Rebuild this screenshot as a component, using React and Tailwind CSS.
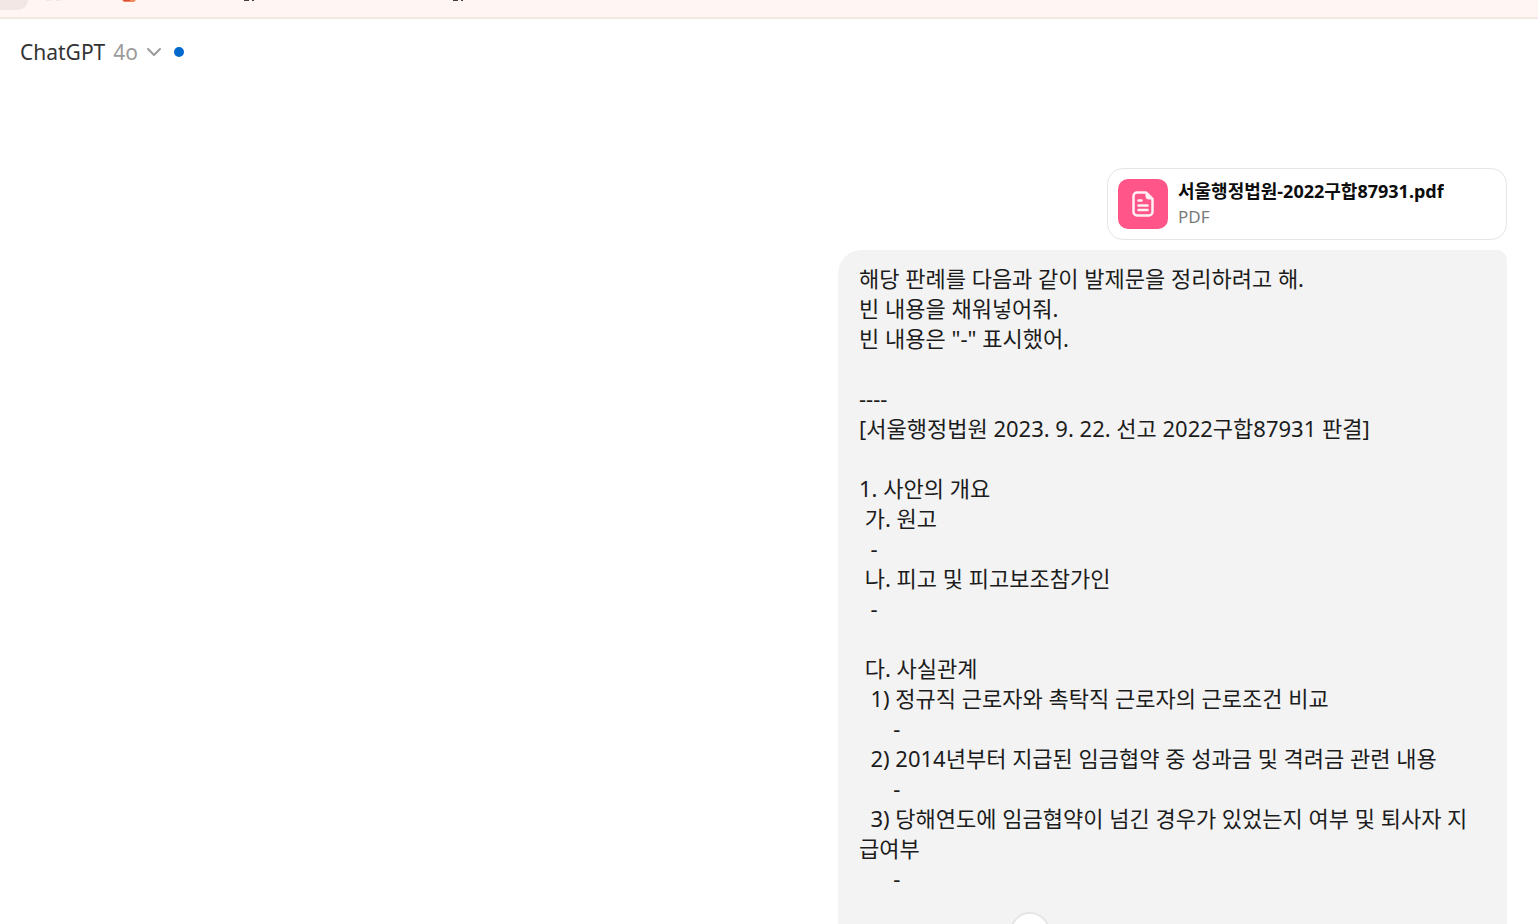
import React from 'react';
import { ArrowDown, ChevronDown } from 'lucide-react';

const message = `해당 판례를 다음과 같이 발제문을 정리하려고 해.
빈 내용을 채워넣어줘.
빈 내용은 "-" 표시했어.

----
[서울행정법원 2023. 9. 22. 선고 2022구합87931 판결]

1. 사안의 개요
 가. 원고
  -
 나. 피고 및 피고보조참가인
  -

 다. 사실관계
  1) 정규직 근로자와 촉탁직 근로자의 근로조건 비교
      -
  2) 2014년부터 지급된 임금협약 중 성과금 및 격려금 관련 내용
      -
  3) 당해연도에 임금협약이 넘긴 경우가 있었는지 여부 및 퇴사자 지급여부
      -


`;

const FileIcon = () => (
    <svg viewBox="0 0 24 28" className="h-7 w-6" fill="none" stroke="#fff0f5" strokeWidth="2.5" strokeLinecap="round" strokeLinejoin="round" aria-hidden="true">
        <path d="M15 2.500H6A3.500 3.500 0 0 0 2.500 6v16A3.500 3.500 0 0 0 6 25.500h12a3.500 3.500 0 0 0 3.500-3.500V9Z" />
        <path d="M15 3v3.500A2.500 2.500 0 0 0 17.500 9H21L15 3Z" fill="#fff0f5" strokeWidth="1" />
        <path d="M7.500 10.500h3M7.500 15.500h9M7.500 20h9" />
    </svg>
);

// 브라우저 북마크바 하단
const BookmarkBar = () => (
    <div className="h-[19px] shrink-0 overflow-hidden border-b-2 border-[#f5e7e2] bg-[#fff6f3]">
        <svg width="500" height="16" aria-hidden="true">
            <rect x="-20" y="-20" width="48" height="30" rx="10" fill="#f3e7e5" />
            <path d="M46 0h5M56 0h5" stroke="#f3e7e5" strokeWidth="2" />
            <path d="M122 0h14l-2 2h-10z" fill="#f08a5a" />
            <path d="M123 0h7v1h-6z" fill="#dc4a3c" />
            <path d="M244 0h5v1h-5zM252 0h2v1h-2zM453 0h5v1h-5zM461 0h2v1h-2z" fill="#4a3c3a" />
        </svg>
    </div>
);

const Header = () => (
    <header className="flex shrink-0 items-center px-5 pt-[15px]">
        <button type="button" className="flex items-center text-[21px] leading-9 text-[#333333]">
            <span>ChatGPT</span>
            <span className="ml-2 text-[#9b9b9b]">4o</span>
            <ChevronDown size={24} strokeWidth={2} className="ml-1 text-[#9b9b9b]" />
        </button>
        <span className="ml-2 size-[10px] rounded-full bg-[#0169cc]" />
    </header>
);

const Attachment = () => (
    <div className="flex w-[400px] max-w-full items-center gap-[10px] rounded-2xl border border-[#e5e5e5] bg-white p-[10px]">
        <div className="flex size-[50px] shrink-0 items-center justify-center rounded-[10px] bg-[#ff5588]">
            <FileIcon />
        </div>
        <div className="min-w-0">
            <div className="truncate text-[18px] leading-[25px] font-bold text-[#0d0d0d]">서울행정법원-2022구합87931.pdf</div>
            <div className="text-[17px] leading-[25px] text-[#7a7a7a]">PDF</div>
        </div>
    </div>
);

const App = () => {
    return (
        <div className="flex h-screen flex-col overflow-hidden bg-white font-['Noto_Sans','Noto_Sans_CJK_KR',sans-serif]">
            <BookmarkBar />
            <Header />
            <main className="min-h-0 flex-1 overflow-hidden pr-[31px]">
                <div className="relative ml-auto flex h-full w-full max-w-[954px] flex-col items-end gap-[10px] pt-[98px]">
                    <Attachment />
                    <div className="w-full max-w-[669px] shrink-0 rounded-3xl rounded-tr-[10px] bg-[#f3f3f3] px-[21px] py-[13px]">
                        <p className="text-[22px] leading-[30px] break-words whitespace-pre-wrap text-[#1c1c1c]">{message}</p>
                    </div>
                    <button
                        type="button"
                        aria-label="맨 아래로 스크롤"
                        className="absolute -bottom-7 left-1/2 flex size-10 -translate-x-1/2 items-center justify-center rounded-full border-2 border-[#e6e6e6] bg-white text-[#333333]"
                    >
                        <ArrowDown size={22} />
                    </button>
                </div>
            </main>
        </div>
    );
};

export default App;
